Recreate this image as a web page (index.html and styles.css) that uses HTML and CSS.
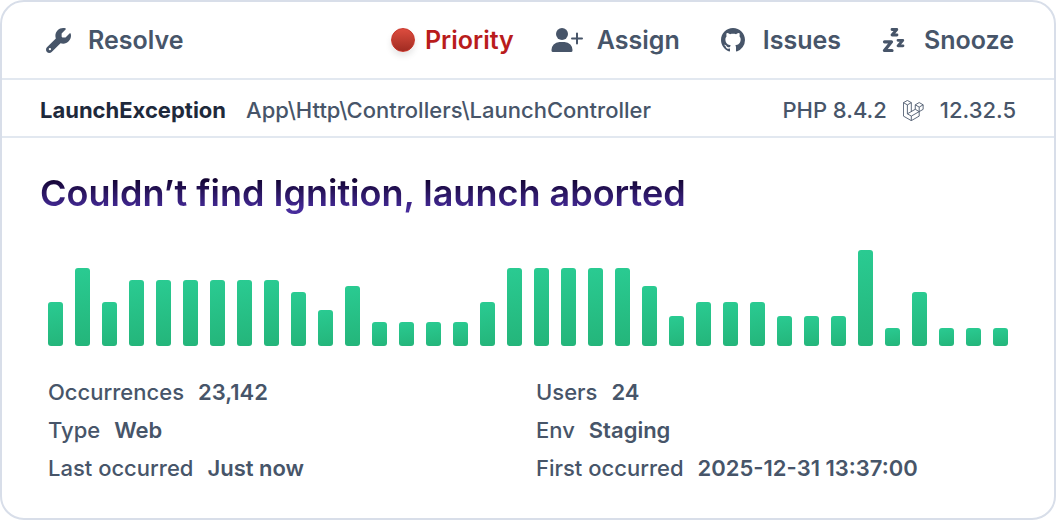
FILE: index.html
```html
<!DOCTYPE html>
<html lang="en">
<head>
    <meta charset="UTF-8">
    <meta name="viewport" content="width=device-width, initial-scale=1.0">
    <title>Couldn’t find Ignition, launch aborted</title>
    <link rel="stylesheet" href="styles.css">
</head>
<body>
    <main class="card">
        <!-- Actions -->
        <header class="toolbar">
            <button type="button" class="action">
                <span class="icon">
                    <svg width="25" height="25" viewBox="0 0 512 512" fill="currentColor" aria-hidden="true"><path d="M352 320c88.4 0 160-71.6 160-160c0-15.3-2.2-30.1-6.2-44.2c-3.1-10.8-16.4-13.2-24.3-5.3l-76.8 76.8c-3 3-7.1 4.7-11.3 4.7L336 192c-8.8 0-16-7.2-16-16l0-57.4c0-4.2 1.7-8.3 4.7-11.3l76.8-76.8c7.9-7.9 5.4-21.2-5.3-24.3C382.1 2.2 367.3 0 352 0C263.6 0 192 71.6 192 160c0 19.1 3.4 37.5 9.5 54.5L19.9 396.1C7.2 408.8 0 426.1 0 444.1C0 481.6 30.4 512 67.9 512c18 0 35.3-7.2 48-19.9L297.5 310.5c17 6.2 35.4 9.5 54.5 9.5zM80 408a24 24 0 1 1 0 48 24 24 0 1 1 0-48z"/></svg>
                </span>
                Resolve
            </button>
            <div class="actions">
                <button type="button" class="action action-priority">
                    <span class="dot"></span>
                    Priority
                </button>
                <button type="button" class="action">
                    <span class="icon">
                        <svg width="32" height="24" viewBox="0 0 32 24" fill="currentColor" aria-hidden="true">
                            <circle cx="11" cy="6" r="6"/>
                            <path d="M8.500 14h5a8 8 0 0 1 8 8.500a1.500 1.500 0 0 1-1.500 1.500H2a1.500 1.500 0 0 1-1.500-1.500a8 8 0 0 1 8-8.500z"/>
                            <path d="M26 5.500v10M21 10.500h10" stroke="currentColor" stroke-width="2" stroke-linecap="round"/>
                        </svg>
                    </span>
                    Assign
                </button>
                <button type="button" class="action">
                    <span class="icon">
                        <svg width="24" height="24" viewBox="0 0 16 16" fill="currentColor" aria-hidden="true"><path d="M8 0C3.580 0 0 3.580 0 8c0 3.540 2.290 6.530 5.470 7.590.4.070.55-.17.55-.38 0-.19-.01-.82-.01-1.490-2.010.37-2.530-.49-2.690-.94-.09-.23-.48-.94-.82-1.130-.28-.15-.68-.52-.01-.53.63-.01 1.080.58 1.230.82.72 1.210 1.870.87 2.330.66.07-.52.28-.87.51-1.070-1.780-.2-3.640-.89-3.640-3.950 0-.87.31-1.590.82-2.150-.08-.2-.36-1.020.08-2.120 0 0 .67-.21 2.200.82.64-.18 1.320-.27 2-.27.68 0 1.360.09 2 .27 1.530-1.040 2.200-.82 2.200-.82.44 1.100.16 1.920.08 2.120.51.56.82 1.270.82 2.150 0 3.070-1.870 3.750-3.650 3.950.29.25.54.73.54 1.480 0 1.070-.01 1.930-.01 2.200 0 .21.15.46.55.38A8.013 8.013 0 0 0 16 8c0-4.420-3.580-8-8-8z"/></svg>
                    </span>
                    Issues
                </button>
                <button type="button" class="action">
                    <span class="icon">
                        <svg width="24" height="24" viewBox="0 0 24 24" fill="none" stroke="currentColor" stroke-linecap="round" stroke-linejoin="round" aria-hidden="true">
                            <path stroke-width="3.200" d="M2.500 13.800h7l-7 8.700h7.500"/>
                            <path stroke-width="2.800" d="M10 1.500h4.800l-4.800 5.500h5"/>
                            <path stroke-width="2.800" d="M16 12.300h4.800l-4.800 5.500h5"/>
                        </svg>
                    </span>
                    Snooze
                </button>
            </div>
        </header>

        <!-- Exception class and versions -->
        <section class="meta">
            <div class="source">
                <strong>LaunchException</strong>
                <span>App\Http\Controllers\LaunchController</span>
            </div>
            <div class="versions">
                <span>PHP 8.4.2</span>
                <svg width="21" height="21" viewBox="0 0 24 24" fill="none" stroke="currentColor" stroke-linejoin="round" aria-label="Laravel" role="img">
                    <path d="M.5 3 5 .5 9.500 3 5 5.600zM.5 3v15.400l9 5.200 9-5.200v-5.100l-9 5.100v5.200M5 5.600v10.200l4.500 2.600M9.500 3v10.200M5 15.800l9-5.200 4.500 2.700M14 5.500l4.500-2.600L23 5.500l-4.500 2.600zM14 5.500v5.100M18.500 8.100v5.200l4.500-2.600V5.500"/>
                </svg>
                <span>12.32.5</span>
            </div>
        </section>

        <section class="body">
            <h1 class="title">Couldn’t find Ignition, launch aborted</h1>

            <div class="chart" id="chart" role="img" aria-label="Occurrences over time"></div>

            <dl class="details">
                <div><dt>Occurrences</dt><dd>23,142</dd></div>
                <div><dt>Users</dt><dd>24</dd></div>
                <div><dt>Type</dt><dd>Web</dd></div>
                <div><dt>Env</dt><dd>Staging</dd></div>
                <div><dt>Last occurred</dt><dd>Just now</dd></div>
                <div><dt>First occurred</dt><dd>2025-12-31 13:37:00</dd></div>
            </dl>
        </section>
    </main>

    <script src="chart.js"></script>
</body>
</html>
```
FILE: styles.css
```css
:root {
    --border: #d8dee9;
    --line: #e2e8f0;
    --text: #475569;
    --dark: #1e293b;
    --priority: #b91c1c;
}

* {
    margin: 0;
    padding: 0;
    box-sizing: border-box;
}

body {
    background: white;
    color: var(--text);
    font-family: Inter, sans-serif;
    font-size: 22px;
    font-weight: 500;
    line-height: 30px;
}

.card {
    min-height: 100vh;
    border: 2px solid var(--border);
    border-radius: 24px;
    background: white;
}

/* Toolbar */
.toolbar {
    display: flex;
    justify-content: space-between;
    align-items: center;
    padding: 23px 40px;
    border-bottom: 2px solid var(--line);
}

.actions {
    display: flex;
    gap: 37px;
}

.action {
    display: flex;
    align-items: center;
    gap: 14px;
    border: none;
    background: none;
    color: var(--text);
    font: inherit;
    font-size: 25px;
    font-weight: 600;
    cursor: pointer;
}

.icon {
    display: flex;
    justify-content: center;
    width: 32px;
}

.action-priority {
    gap: 10px;
    color: var(--priority);
}

.dot {
    width: 24px;
    height: 24px;
    border: 1px solid #c9362b;
    border-radius: 50%;
    background: linear-gradient(#dc4c3e, #a12c22);
    box-shadow: 0 4px 6px rgba(0, 0, 0, 0.1);
}

/* Exception row */
.meta {
    display: flex;
    justify-content: space-between;
    padding: 15px 38px 11px;
    border-bottom: 2px solid var(--line);
}

.source,
.versions {
    display: flex;
    align-items: center;
    gap: 16px;
}

.source {
    gap: 20px;
}

.source strong {
    color: var(--dark);
    font-weight: 700;
}

/* Body */
.body {
    padding: 31px 38px;
}

.title {
    width: fit-content;
    background: linear-gradient(#0e0028 15%, #472c9c 85%);
    background-clip: text;
    -webkit-background-clip: text;
    color: transparent;
    font-size: 36px;
    font-weight: 600;
    line-height: 48px;
}

.chart {
    display: flex;
    justify-content: space-between;
    align-items: flex-end;
    height: 96px;
    margin: 33px 8px 31px;
}

.bar {
    width: 15px;
    border-radius: 3px;
    background: linear-gradient(170deg, #2acb92, #24b57a);
}

.details {
    display: grid;
    grid-template-columns: 1fr 1fr;
    gap: 8px 16px;
    padding: 0 8px;
}

.details div {
    display: flex;
    gap: 14px;
}

.details dd {
    font-weight: 600;
}
```
FILE: chart.js
```js
const chart = document.getElementById('chart');

// Bar heights in pixels, oldest first
const bars = [
    44, 78, 44, 66, 66, 66, 66, 66, 66, 54, 36, 60,
    24, 24, 24, 24, 44, 78, 78, 78, 78, 78, 60, 30,
    44, 44, 44, 30, 30, 30, 96, 18, 54, 18, 18, 18
];

bars.forEach(height => {
    const bar = document.createElement('span');
    bar.className = 'bar';
    bar.style.height = `${height}px`;
    chart.appendChild(bar);
});
```
